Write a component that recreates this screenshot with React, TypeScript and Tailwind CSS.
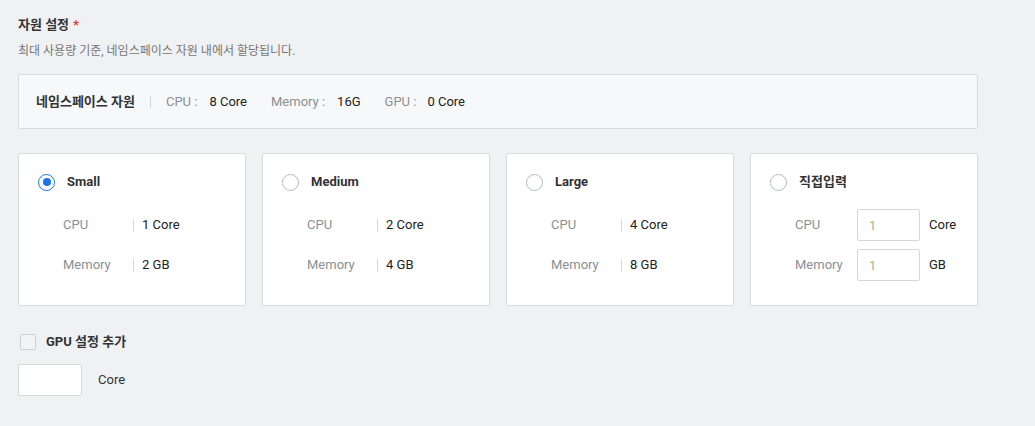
import { useState } from "react";

interface Preset {
  key: string;
  name: string;
  cpu: string;
  memory: string;
}

const presets: Preset[] = [
  { key: "small", name: "Small", cpu: "1 Core", memory: "2 GB" },
  { key: "medium", name: "Medium", cpu: "2 Core", memory: "4 GB" },
  { key: "large", name: "Large", cpu: "4 Core", memory: "8 GB" },
];

function Radio({ checked }: { checked: boolean }) {
  return (
    <span
      className={`flex items-center justify-center w-[17px] h-[17px] rounded-full border bg-white ${
        checked ? "border-[#1a73e8]" : "border-[#b3b9c2]"
      }`}
    >
      {checked && <span className="w-[8px] h-[8px] rounded-full bg-[#1a73e8]" />}
    </span>
  );
}

function SpecRow({ label, value }: { label: string; value: string }) {
  return (
    <div className="flex items-center h-8">
      <span className="w-[70px] text-[#8a8f96]">{label}</span>
      <span className="w-px h-[12px] bg-[#d3d6db]" />
      <span className="pl-2 text-[#222]">{value}</span>
    </div>
  );
}

export default function App() {
  const [selected, setSelected] = useState("small");
  const [gpuOn, setGpuOn] = useState(false);

  return (
    <div
      className="w-[1035px] h-[426px] bg-[#f0f1f3] pl-[18px] pt-[16px] text-[13px]"
      style={{ fontFamily: 'Roboto, "Noto Sans CJK KR", sans-serif' }}
    >
      <div className="flex items-center h-[18px] font-bold text-[#333]">
        자원 설정<span className="ml-1 text-[#e53935]">*</span>
      </div>
      <p className="mt-[9px] h-[16px] leading-[16px] text-[12px] text-[#777]">
        최대 사용량 기준, 네임스페이스 자원 내에서 할당됩니다.
      </p>

      <div className="mt-[15px] w-[960px] h-[55px] flex items-center px-[17px] bg-[#f7f8fa] border border-[#d8dbdf] rounded-[2px]">
        <span className="font-bold text-[#333]">네임스페이스 자원</span>
        <span className="mx-[15px] w-px h-[12px] bg-[#d3d6db]" />
        <span className="text-[#8a8f96]">CPU :</span>
        <span className="ml-[12px] text-[#222]">8 Core</span>
        <span className="ml-[24px] text-[#8a8f96]">Memory :</span>
        <span className="ml-[12px] text-[#222]">16G</span>
        <span className="ml-[24px] text-[#8a8f96]">GPU :</span>
        <span className="ml-[11px] text-[#222]">0 Core</span>
      </div>

      <div className="mt-[24px] flex gap-[16px]">
        {presets.map((p) => (
          <div
            key={p.key}
            onClick={() => setSelected(p.key)}
            className="w-[228px] h-[153px] bg-white border border-[#d8dbdf] rounded-[2px] pl-[19px] pt-[18px] cursor-pointer"
          >
            <div className="flex items-center h-[20px] gap-[12px]">
              <Radio checked={selected === p.key} />
              <span className="font-bold text-[#333]">{p.name}</span>
            </div>
            <div className="mt-[17px] ml-[25px] flex flex-col gap-2">
              <SpecRow label="CPU" value={p.cpu} />
              <SpecRow label="Memory" value={p.memory} />
            </div>
          </div>
        ))}

        <div
          onClick={() => setSelected("custom")}
          className="w-[228px] h-[153px] bg-white border border-[#d8dbdf] rounded-[2px] pl-[19px] pt-[18px] cursor-pointer"
        >
          <div className="flex items-center h-[20px] gap-[12px]">
            <Radio checked={selected === "custom"} />
            <span className="font-bold text-[#333]">직접입력</span>
          </div>
          <div className="mt-[17px] ml-[25px] flex flex-col gap-2">
            {[
              { label: "CPU", unit: "Core" },
              { label: "Memory", unit: "GB" },
            ].map((r) => (
              <div key={r.label} className="flex items-center h-8">
                <span className="w-[62px] text-[#8a8f96]">{r.label}</span>
                <input
                  className="w-[63px] h-8 px-[11px] border border-[#d3d6db] rounded-[2px] bg-white outline-none placeholder:text-[#bba88d]"
                  placeholder="1"
                  defaultValue=""
                />
                <span className="ml-[9px] text-[#222]">{r.unit}</span>
              </div>
            ))}
          </div>
        </div>
      </div>

      <div className="mt-[28px] flex items-center h-[16px] gap-[10px]">
        <span
          onClick={() => setGpuOn(!gpuOn)}
          className="ml-[2px] w-[16px] h-[16px] border border-[#cbcfd5] bg-[#f3f4f6] rounded-[2px] cursor-pointer"
        />
        <span className="font-bold text-[#333]">GPU 설정 추가</span>
      </div>

      <div className="mt-[14px] flex items-center gap-[16px]">
        <input className="w-[64px] h-[32px] bg-white border border-[#d3d6db] rounded-[2px] outline-none" />
        <span className="text-[#333]">Core</span>
      </div>
    </div>
  );
}
